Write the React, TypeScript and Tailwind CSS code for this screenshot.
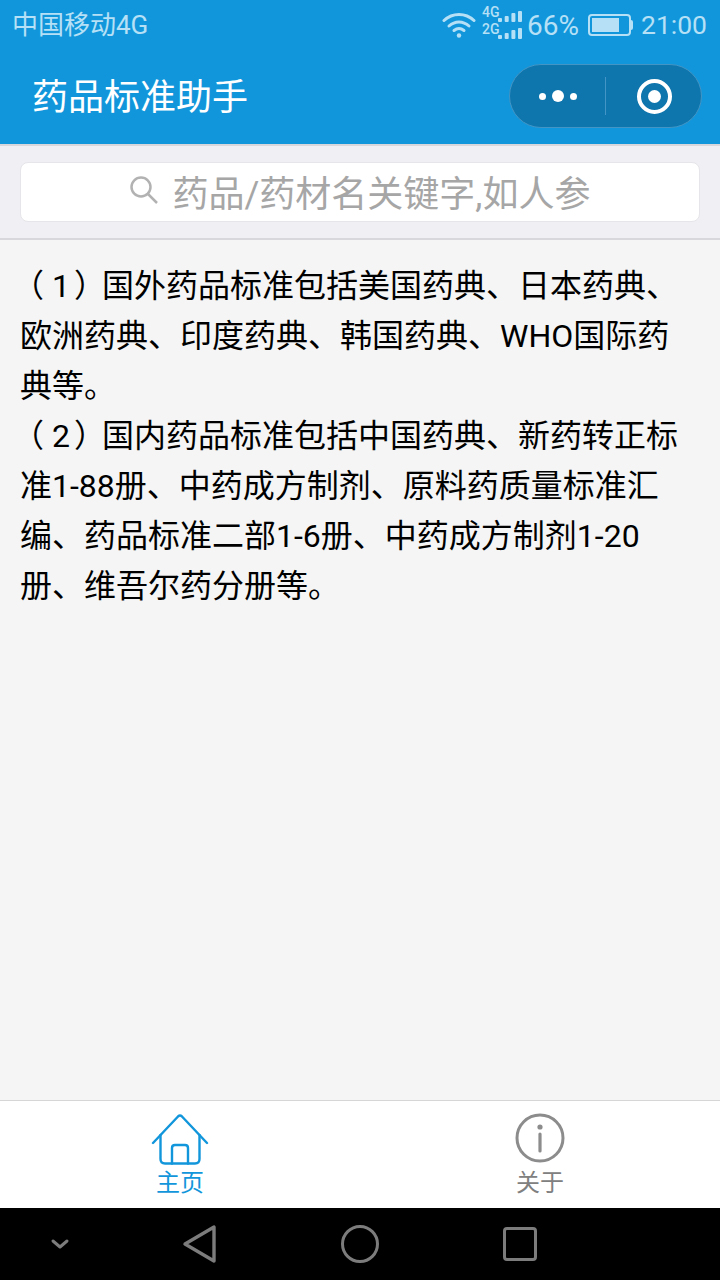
import React from 'react';

const font = "font-['Roboto','Noto_Sans_CJK_SC',sans-serif]";

const Signal: React.FC = () => (
  <svg width="24" height="11" viewBox="0 0 24 11" fill="currentColor">
    <rect x="0" y="7" width="4" height="4" rx="1" />
    <rect x="6.7" y="5" width="4" height="6" rx="1" />
    <rect x="13.4" y="2" width="4" height="9" rx="1" />
    <rect x="20" y="0" width="4" height="11" rx="1" />
  </svg>
);

const StatusBar: React.FC = () => (
  <div className="h-12 flex items-center justify-between pl-3 pr-[13px] text-[#b5e0f6]">
    <span className="text-[26px] leading-none pt-[2px]">中国移动4G</span>
    <div className="flex items-center">
      {/* wifi */}
      <svg width="34" height="28" viewBox="0 0 34 28" fill="none" stroke="currentColor" strokeWidth="3" strokeLinecap="round" className="mt-[2px]">
        <path d="M2 9.5C10.5 1.5 23.5 1.5 32 9.5" />
        <path d="M7 15C13 9.5 21 9.5 27 15" />
        <path d="M12 19.5C15 17.2 19 17.2 22 19.5" />
        <circle cx="17" cy="24.5" r="2.2" fill="currentColor" stroke="none" />
      </svg>
      <div className="ml-[6px] w-[40px] h-[32px] relative">
        <span className="absolute left-0 top-[-3px] text-[14px] leading-[14px] font-medium">4G</span>
        <span className="absolute left-0 top-[14px] text-[14px] leading-[14px] font-medium">2G</span>
        <div className="absolute right-0 top-[3px] leading-none"><Signal /></div>
        <div className="absolute right-0 top-[20px] leading-none"><Signal /></div>
      </div>
      <span className="ml-[5px] text-[28px] leading-none pt-[3px]">66%</span>
      <div className="ml-[9px] mt-[2px] flex items-center">
        <div className="w-[43px] h-[22px] border-2 border-[#b5e0f6] rounded-[4px] p-[2px]">
          <div className="w-[27px] h-full bg-[#b5e0f6]"></div>
        </div>
        <div className="w-[2px] h-[10px] bg-[#b5e0f6] rounded-r-sm"></div>
      </div>
      <span className="ml-2 text-[26.5px] leading-none pt-[3px]">21:00</span>
    </div>
  </div>
);

const Header: React.FC = () => (
  <div className="h-24 flex items-center justify-between pl-8 pr-[18px]">
    <span className="text-[36px] leading-none text-white pt-[4px]">药品标准助手</span>
    <div className="w-[193px] h-[64px] rounded-full bg-[#0f75ad] border border-[#4295c4] flex items-center">
      <div className="w-[95px] flex items-center justify-center gap-[6px]">
        <span className="w-[7px] h-[7px] rounded-full bg-white"></span>
        <span className="w-[12px] h-[12px] rounded-full bg-white"></span>
        <span className="w-[7px] h-[7px] rounded-full bg-white"></span>
      </div>
      <div className="w-px h-[38px] bg-[#4295c4]"></div>
      <div className="flex-1 pl-[2px] flex items-center justify-center">
        <div className="w-[35px] h-[35px] rounded-full border-[4px] border-white flex items-center justify-center">
          <span className="w-[13px] h-[13px] rounded-full bg-white"></span>
        </div>
      </div>
    </div>
  </div>
);

const SearchBar: React.FC = () => (
  <div className="h-[96px] bg-[#efeff4] border-t-2 border-b-2 border-[#d8d7dc] px-5 flex items-center">
    <div className="w-full h-[60px] bg-white rounded-[8px] border border-[#e6e6ea] flex items-center justify-center">
      <svg width="28" height="28" viewBox="0 0 28 28" fill="none" stroke="#b2b2b2" strokeWidth="2.5" className="mr-[15px] mb-[4px]">
        <circle cx="11" cy="11" r="9.5" />
        <path d="M18 18L27 27" />
      </svg>
      <span className="text-[36px] leading-none text-[#a6a6a6] pt-[6px]">药品/药材名关键字,如人参</span>
    </div>
  </div>
);

const Content: React.FC = () => (
  <div className="flex-1 bg-[#f5f5f5] px-5 pt-[21px] text-[32px] leading-[50px] text-black">
    {/* the brackets sit further out than this font draws them, margins nudge them */}
    <p><span className="ml-[-8px] mr-[8px]">（</span>1<span className="ml-[4px] mr-[-4px]">）</span>国外药品标准包括美国药典、日本药典、欧洲药典、印度药典、韩国药典、WHO国际药典等。</p>
    <p><span className="ml-[-8px] mr-[8px]">（</span>2<span className="ml-[4px] mr-[-4px]">）</span>国内药品标准包括中国药典、新药转正标准1-88册、中药成方制剂、原料药质量标准汇编、药品标准二部1-6册、中药成方制剂1-20册、维吾尔药分册等。</p>
  </div>
);

const TabBar: React.FC = () => (
  <div className="h-[108px] bg-white border-t border-[#d6d6d6] flex">
    <div className="flex-1 flex flex-col items-center pt-[13px]">
      <svg width="58" height="52" viewBox="0 0 58 52" fill="none" stroke="#1296db" strokeWidth="2.4" strokeLinecap="round" strokeLinejoin="round">
        <path d="M2 29L27 2.5C28.2 1.4 29.8 1.4 31 2.5L56 29" />
        <path d="M9.5 21V45C9.5 48 11 49.5 14 49.5H44C47 49.5 48.5 48 48.5 45V21" />
        <path d="M21 49.5V34C21 32 22 31 24 31H34C36 31 37 32 37 34V49.5" />
      </svg>
      <span className="text-[24px] leading-none mt-[5px] text-[#1296db]">主页</span>
    </div>
    <div className="flex-1 flex flex-col items-center pt-3">
      <svg width="50" height="50" viewBox="0 0 50 50" fill="none" stroke="#8c8c8c">
        <circle cx="25" cy="25" r="23" strokeWidth="3" />
        <circle cx="25" cy="14" r="2.6" fill="#8c8c8c" stroke="none" />
        <path d="M25 21V38" strokeWidth="3.2" strokeLinecap="round" />
      </svg>
      <span className="text-[24px] leading-none mt-[8px] text-[#808080]">关于</span>
    </div>
  </div>
);

const NavBar: React.FC = () => (
  <div className="h-[72px] bg-black flex items-center">
    <div className="w-[120px] flex justify-center">
      <svg width="20" height="12" viewBox="0 0 20 12" fill="none" stroke="#7c7c7c" strokeWidth="3" strokeLinecap="round" strokeLinejoin="round">
        <path d="M3 3L10 9L17 3" />
      </svg>
    </div>
    <div className="w-[160px] flex justify-center">
      <svg width="36" height="40" viewBox="0 0 36 40" fill="none" stroke="#7c7c7c" strokeWidth="3.4" strokeLinejoin="round">
        <path d="M3 20L32 3V37Z" />
      </svg>
    </div>
    <div className="w-[160px] flex justify-center">
      <div className="w-[38px] h-[38px] rounded-full border-[3px] border-[#7c7c7c]"></div>
    </div>
    <div className="w-[160px] flex justify-center">
      <div className="w-[34px] h-[34px] rounded-[4px] border-[3px] border-[#7c7c7c]"></div>
    </div>
  </div>
);

export default function App() {
  return (
    <div className={`${font} w-[720px] h-[1280px] flex flex-col overflow-hidden`}>
      <div className="bg-[#1296db]">
        <StatusBar />
        <Header />
      </div>
      <SearchBar />
      <Content />
      <TabBar />
      <NavBar />
    </div>
  );
}
